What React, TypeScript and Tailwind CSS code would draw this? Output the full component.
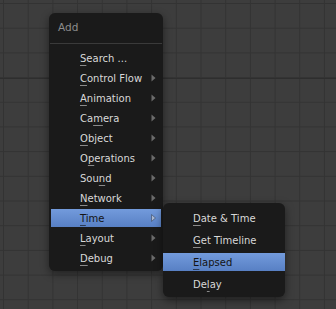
import React from "react";

type Item = { pre: string; key: string; post: string; sub?: boolean; active?: boolean };

const mainItems: Item[] = [
  { pre: "", key: "S", post: "earch ..." },
  { pre: "", key: "C", post: "ontrol Flow", sub: true },
  { pre: "", key: "A", post: "nimation", sub: true },
  { pre: "Ca", key: "m", post: "era", sub: true },
  { pre: "", key: "O", post: "bject", sub: true },
  { pre: "O", key: "p", post: "erations", sub: true },
  { pre: "Sou", key: "n", post: "d", sub: true },
  { pre: "", key: "N", post: "etwork", sub: true },
  { pre: "", key: "T", post: "ime", sub: true, active: true },
  { pre: "", key: "L", post: "ayout", sub: true },
  { pre: "", key: "D", post: "ebug", sub: true },
];

const timeItems: Item[] = [
  { pre: "", key: "D", post: "ate & Time" },
  { pre: "", key: "G", post: "et Timeline" },
  { pre: "", key: "E", post: "lapsed", active: true },
  { pre: "De", key: "l", post: "ay" },
];

function Label({ item }: { item: Item }) {
  return (
    <span>
      {item.pre}
      <span className={`underline underline-offset-[3px] ${item.active ? "decoration-[#2a3a55]" : "decoration-[#8a8a8a]"}`}>{item.key}</span>
      {item.post}
    </span>
  );
}

function Arrow({ active }: { active?: boolean }) {
  return (
    <svg width="5" height="8" viewBox="0 0 5 8" className="shrink-0">
      <polygon points="0.5,0.5 4.5,4 0.5,7.5" fill={active ? "#a9b8d2" : "#6b6b6b"} stroke={active ? "#4a5c7a" : "none"} strokeWidth="0.8" />
    </svg>
  );
}

function Row({ item, height, textLeft }: { item: Item; height: string; textLeft: string }) {
  return (
    <div className={`flex items-center ${height}`}>
      <div
        className={`flex h-[18px] w-full items-center pr-[5px] ${textLeft} ${
          item.active ? "bg-[linear-gradient(to_bottom,#739bdc,#5880c4)] text-[#141414]" : "text-[#d8d8d8]"
        }`}
      >
        <span className="flex-1">
          <Label item={item} />
        </span>
        {item.sub && <Arrow active={item.active} />}
      </div>
    </div>
  );
}

export default function App() {
  return (
    <div className="relative h-[309px] w-[336px] overflow-hidden bg-[#3d3d3d] font-['DejaVu_Sans',sans-serif] text-[10px]">
      {/* node editor grid */}
      <div className="absolute inset-0 bg-[linear-gradient(to_right,#333333_1px,transparent_1px),linear-gradient(to_bottom,#333333_1px,transparent_1px)] bg-size-[24.7px_24.7px] bg-position-[3px_3px]" />
      <div className="absolute inset-x-0 top-[78px] h-px bg-[#2e2e2e]" />

      {/* main Add menu */}
      <div className="absolute left-[49px] top-[13px] w-[114px] rounded-[6px] bg-[#1a1a1a] pb-[3px] shadow-[0_3px_8px_rgba(0,0,0,0.45)]">
        <div className="flex h-[30px] items-center pl-[9px] text-[10.5px] text-[#8c8c8c]">Add</div>
        <div className="mx-[1px] h-px bg-[#3a3a3a]" />
        <div className="mt-[4px] flex flex-col px-[2px]">
          {mainItems.map((it) => (
            <Row key={it.pre + it.key + it.post} item={it} height="h-[20px]" textLeft="pl-[29px]" />
          ))}
        </div>
      </div>

      {/* Time submenu */}
      <div className="absolute left-[163px] top-[203px] w-[122px] rounded-[6px] bg-[#1a1a1a] pb-[2px] pt-[4px] shadow-[0_3px_8px_rgba(0,0,0,0.5)]">
        {timeItems.map((it) => (
          <Row key={it.key + it.post} item={it} height="h-[22px]" textLeft="pl-[30px]" />
        ))}
      </div>
    </div>
  );
}
